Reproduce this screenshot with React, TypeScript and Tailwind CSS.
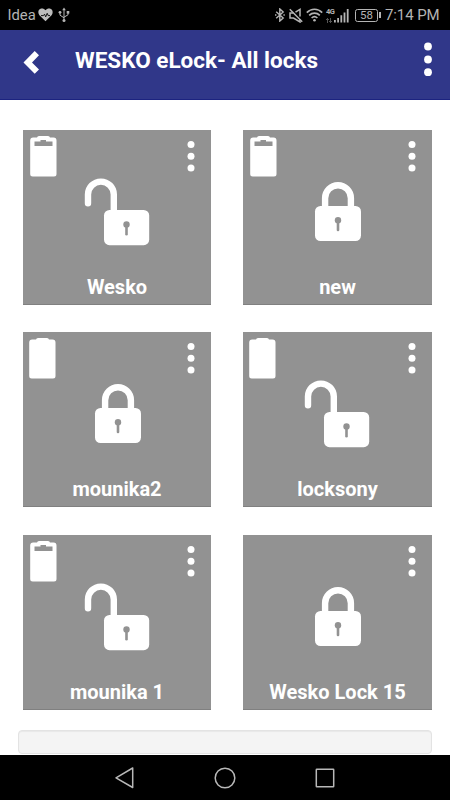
import React from 'react';

interface Lock {
  name: string;
  locked: boolean;
  battery?: 'full' | 'high';
}

const locks: Lock[] = [
  { name: 'Wesko', locked: false, battery: 'high' },
  { name: 'new', locked: true, battery: 'high' },
  { name: 'mounika2', locked: true, battery: 'full' },
  { name: 'locksony', locked: false, battery: 'full' },
  { name: 'mounika 1', locked: false, battery: 'high' },
  { name: 'Wesko Lock 15', locked: true },
];

const StatusBar: React.FC = () => (
  <div className="flex h-[30px] shrink-0 items-center bg-black pl-[7.5px] pr-[10px] text-[#b4b4b4]">
    <span className="w-[30px] whitespace-nowrap pt-px text-[14.8px] leading-[29px]">Idea</span>
    {/* Heart rate */}
    <svg width="15" height="14" viewBox="0 0 15 14" className="ml-[0.5px]">
      <path d="M7.5 13.2 1.4 7.2C-.2 5.2 0 2.2 2.1 1 4 .1 6 .6 7.5 2.2 9 .6 11 .1 12.9 1c2.1 1.2 2.3 4.2.7 6.2z" fill="#bdbdbd" />
      <path d="M3 7.600h2.400L6.500 6.200l1.200 2.600 1.500-3.500 1 2.300H12" fill="none" stroke="#000" strokeWidth="0.9" />
    </svg>
    {/* USB */}
    <svg width="12" height="16" viewBox="0 0 12 16" className="ml-[5px]" fill="none" stroke="#b4b4b4" strokeWidth="1">
      <path d="M6 2v11M2 5.5v2.7l4 2.6M10 5.5v2.3L6 10.2" />
      <path d="M6 .5 7.8 3.3H4.2z" fill="#b4b4b4" stroke="none" />
      <circle cx="6" cy="13.6" r="1.5" fill="#b4b4b4" stroke="none" />
      <circle cx="2" cy="5.3" r="1.4" fill="#b4b4b4" stroke="none" />
      <path d="M8.7 4h2.6v2.6H8.7z" fill="#b4b4b4" stroke="none" />
    </svg>
    <div className="ml-auto flex items-center">
      {/* Bluetooth */}
      <svg width="10" height="14" viewBox="0 0 10 14" fill="none" stroke="#b4b4b4" strokeWidth="1.4">
        <path d="m1.200 3.700 7 6.400-3.400 3V.9l3.400 3-7 6.400" />
        <path d="M0 7h1.400M8.400 7h1.400" />
      </svg>
      {/* Muted speaker */}
      <svg width="14" height="15" viewBox="0 0 14 15" className="ml-[4px]" fill="none" stroke="#b4b4b4" strokeWidth="1.5">
        <path d="M4.500 5H1v5h3.500l6.500 4v-3M6.500 4.200 11 1.400v7.200" />
        <path d="m.8 1.200 12.400 12.600" />
      </svg>
      {/* Wi-Fi */}
      <svg width="17" height="14" viewBox="0 0 17 14" className="ml-[3px]" fill="none" stroke="#b4b4b4" strokeWidth="1.6">
        <path d="M.8 4.600c4.300-4.400 11.100-4.400 15.400 0M3.200 7.400c3-3 7.600-3 10.600 0M5.600 10c1.700-1.600 4.100-1.600 5.800 0" />
        <circle cx="8.500" cy="12.300" r="1.300" fill="#b4b4b4" stroke="none" />
      </svg>
      {/* Mobile signal */}
      <div className="ml-[3px] flex h-[15px] w-[23px] items-end">
        <div className="flex h-full w-[8px] flex-col justify-between">
          <span className="text-[7.5px] font-bold leading-[8px] tracking-[-0.5px]">4G</span>
          <svg width="6" height="5" viewBox="0 0 6 5" stroke="#555" strokeWidth="1">
            <path d="M1.500 0v5M4.500 0v5M0 1.500h3M3 3.500h3" />
          </svg>
        </div>
        <svg width="15" height="15" viewBox="0 0 15 15" fill="#b4b4b4">
          <path d="M0 12h1.800v2.500H0zM3.200 10H5v4.500H3.200zM6.400 7.200h1.800v7.300H6.400zM9.600 4.500h1.800v10H9.600zM12.800 1h1.800v13.500h-1.800z" />
        </svg>
      </div>
      {/* Battery level */}
      <div className="ml-[6px] flex h-[13px] w-[23px] items-center justify-center rounded-[2.5px] border border-[#b4b4b4] text-[11.5px] leading-[11px]">
        58
      </div>
      <div className="ml-px h-[6px] w-[2px] bg-[#b4b4b4]" />
      <span className="ml-[4px] w-[55px] whitespace-nowrap pt-px text-[15px] leading-[29px] tracking-[-0.1px]">7:14 PM</span>
    </div>
  </div>
);

const Header: React.FC = () => (
  <header className="flex h-[70px] shrink-0 items-start border-b border-[#1c2380] bg-[#303789] text-white">
    <button className="ml-[23px] mt-[21px]" aria-label="Back">
      <svg width="17" height="23" viewBox="0 0 17 23">
        <path d="M11.700 0 16 4.300 9 11.500l7 7-4.300 4.300L.5 11.500z" fill="#fff" />
      </svg>
    </button>
    <h1 className="ml-[35px] mt-[15px] whitespace-nowrap text-[22.5px] font-bold leading-[30px]">WESKO eLock- All locks</h1>
    <button className="ml-auto mr-[17px] mt-[11px]" aria-label="More options">
      <svg width="10" height="36" viewBox="0 0 10 36" fill="#fff">
        <circle cx="5" cy="5.500" r="3.900" />
        <circle cx="5" cy="18.500" r="3.900" />
        <circle cx="5" cy="31.200" r="3.900" />
      </svg>
    </button>
  </header>
);

const BatteryIcon: React.FC<{ level: 'full' | 'high' }> = ({ level }) => (
  <svg
    width="27"
    height="41"
    viewBox="0 0 27 41"
    className={level === 'full' ? 'ml-[6px] mt-[6px]' : 'ml-[7px] mt-[6px]'}
  >
    <path
      d="M3.200 1.500H7Q7.300 0 9 0h9q1.700 0 2 1.500h3.500q3 0 3 3V38q0 2.500-2.500 2.500H2.700Q.2 40.500.2 38V4.500q0-3 3-3z"
      fill="#fff"
    />
    {level === 'high' && <path d="M4.500 5.500h6V4h5.500v1.500h6.500V10h-18z" fill="#929292" />}
  </svg>
);

const LockIcon: React.FC<{ locked: boolean }> = ({ locked }) => (
  <svg width="72" height="72" viewBox="0 0 72 72" fill="none" className="ml-[58px]">
    {locked ? (
      <>
        <path d="M24.100 34V22.200a12.900 12.900 0 0 1 25.800 0V34" stroke="#fff" strokeWidth="6.400" />
        <rect x="14" y="30" width="46" height="35" rx="5.500" fill="#fff" />
        <circle cx="37" cy="44.300" r="3.200" fill="#929292" />
        <path d="M37 45v9" stroke="#929292" strokeWidth="2.600" strokeLinecap="round" />
      </>
    ) : (
      <>
        <path d="M7 27.300V18.500a12.900 12.900 0 0 1 25.800 0V36" stroke="#fff" strokeWidth="6.400" strokeLinecap="round" />
        <rect x="23" y="34" width="45.200" height="35.200" rx="5.500" fill="#fff" />
        <circle cx="45.500" cy="48.500" r="3.200" fill="#929292" />
        <path d="M45.500 49v9.200" stroke="#929292" strokeWidth="2.600" strokeLinecap="round" />
      </>
    )}
  </svg>
);

const LockTile: React.FC<{ lock: Lock }> = ({ lock }) => (
  <div className="flex h-[175px] flex-col border-b border-[#808080] bg-[#929292]">
    <div className="flex h-[46px] items-start">
      {lock.battery && <BatteryIcon level={lock.battery} />}
      <svg width="8" height="32" viewBox="0 0 8 32" fill="#fff" className="ml-auto mr-[16px] mt-[10px]">
        <circle cx="4" cy="4.400" r="3.500" />
        <circle cx="4" cy="16.200" r="3.500" />
        <circle cx="4" cy="28" r="3.500" />
      </svg>
    </div>
    <LockIcon locked={lock.locked} />
    <div className="mt-[27px] whitespace-nowrap text-center text-[20px] font-bold leading-[24px] text-white">{lock.name}</div>
  </div>
);

const NavigationBar: React.FC = () => (
  <div className="flex h-[45px] shrink-0 items-center justify-center gap-[78px] bg-black">
    <svg width="22" height="22" viewBox="0 0 22 22" fill="none" stroke="#b8b8b8" strokeWidth="1.500" strokeLinejoin="round">
      <path d="M18.700 1v19.500L2 10.800z" />
    </svg>
    <svg width="22" height="22" viewBox="0 0 22 22" fill="none" stroke="#b8b8b8" strokeWidth="1.500">
      <circle cx="11" cy="11" r="9.800" />
    </svg>
    <svg width="22" height="22" viewBox="0 0 22 22" fill="none" stroke="#b8b8b8" strokeWidth="1.500">
      <rect x="2.300" y="2.300" width="17.400" height="17.400" rx="0.500" />
    </svg>
  </div>
);

const App: React.FC = () => (
  <div className="flex h-[800px] w-[450px] flex-col overflow-hidden bg-white font-['Roboto',sans-serif]">
    <StatusBar />
    <Header />
    <main className="flex-1 overflow-hidden pt-[30px]">
      <div className="ml-[23px] grid grid-cols-[188px_189px] gap-x-[32px] gap-y-[27.3px]">
        {locks.map((lock) => (
          <LockTile key={lock.name} lock={lock} />
        ))}
      </div>
      <div className="mx-[18px] mt-[20px] h-[24px] rounded-[4px] border border-[#e3e3e3] bg-[#f4f4f4] shadow-[inset_0_1px_1px_rgba(0,0,0,0.05)]" />
    </main>
    <NavigationBar />
  </div>
);

export default App;
